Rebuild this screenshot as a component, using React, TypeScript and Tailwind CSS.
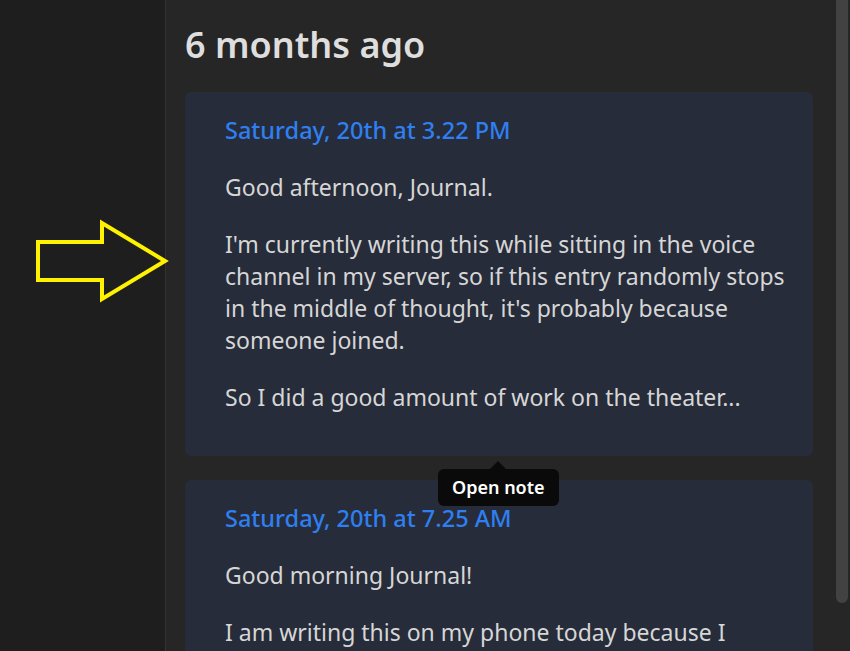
import React from "react";

const font = { fontFamily: '"Noto Sans", "Open Sans", sans-serif' };

function Entry({ date, paragraphs }: { date: string; paragraphs: string[][] }) {
  return (
    <article className="rounded-md bg-[#262c3a] pl-10 pr-4 pt-[22px] pb-[43px]">
      <h3 className="text-[23.5px] leading-[32px] font-medium text-[#2f7ff0] whitespace-nowrap">{date}</h3>
      {paragraphs.map((lines, i) => (
        <p key={i} className="mt-[25px] text-[23px] leading-[32px] text-[#d6d6d6] whitespace-nowrap">
          {lines.map((l, j) => (
            <React.Fragment key={j}>
              {j > 0 && <br />}
              {l}
            </React.Fragment>
          ))}
        </p>
      ))}
    </article>
  );
}

export default function App() {
  return (
    <div className="flex h-[651px] w-[850px] overflow-hidden bg-[#262626]" style={font}>
      <aside className="relative w-[166px] shrink-0 bg-[#1e1e1e] border-r border-[#333333]">
        <svg className="absolute left-[34px] top-[219px]" width="138" height="86" viewBox="34 219 138 86">
          <polygon
            points="38,242 102,242 102,223 165,261 102,299 102,280 38,280"
            fill="none"
            stroke="#fff200"
            strokeWidth="4"
            strokeLinejoin="miter"
          />
        </svg>
      </aside>
      <main className="relative flex-1 pl-[19px] pr-[37px]">
        <h2 className="pt-[20px] text-[36px] leading-[50px] font-semibold text-[#dedede]">6 months ago</h2>
        <div className="mt-[22px] flex flex-col gap-6">
          <Entry
            date="Saturday, 20th at 3.22 PM"
            paragraphs={[
              ["Good afternoon, Journal."],
              [
                "I'm currently writing this while sitting in the voice",
                "channel in my server, so if this entry randomly stops",
                "in the middle of thought, it's probably because",
                "someone joined.",
              ],
              ["So I did a good amount of work on the theater..."],
            ]}
          />
          <Entry
            date="Saturday, 20th at 7.25 AM"
            paragraphs={[["Good morning Journal!"], ["I am writing this on my phone today because I"]]}
          />
        </div>
        <div className="absolute left-[272px] top-[461px] flex flex-col items-center">
          <div className="h-0 w-0 border-x-[8px] border-b-[8px] border-x-transparent border-b-[#0a0a0a]" />
          <div className="rounded-md bg-[#0a0a0a] px-[14px] py-[6px] text-[18px] leading-[25px] font-semibold text-white">
            Open note
          </div>
        </div>
        <div className="absolute right-[2px] top-0 h-[603px] w-[12px] rounded-b-md bg-[#424242]" />
      </main>
    </div>
  );
}
